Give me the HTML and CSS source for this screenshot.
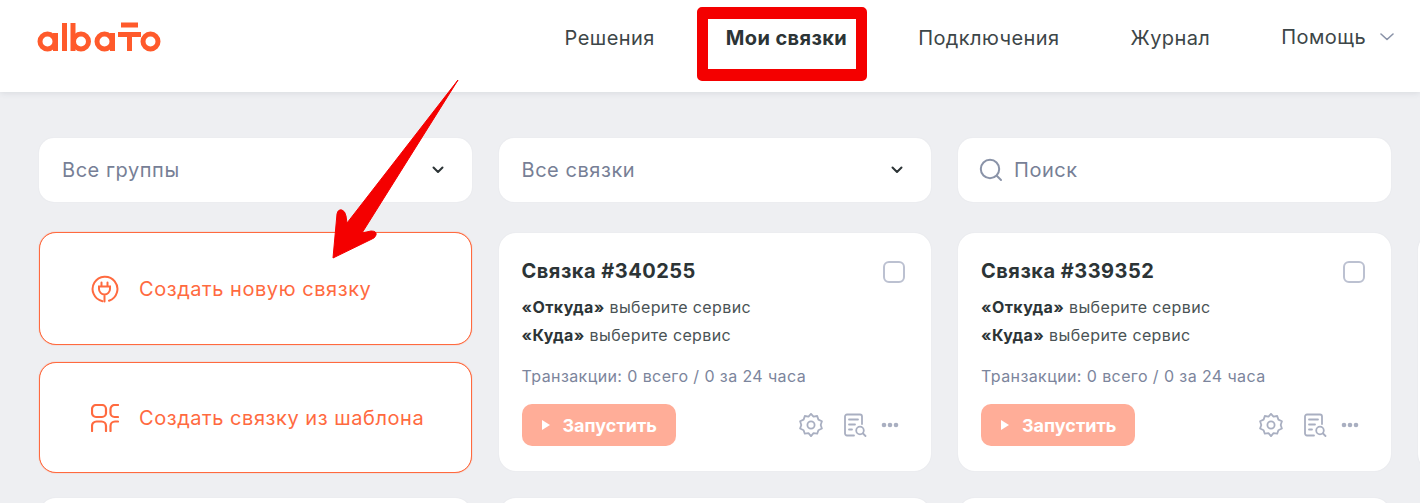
FILE: index.html
```html
<!DOCTYPE html>
<html lang="ru">
<head>
<meta charset="utf-8">
<title>Мои связки</title>
<link rel="stylesheet" href="styles.css">
</head>
<body>
<header class="topbar">
  <svg class="logo" width="130" height="34" viewBox="0 0 130 34" role="img" aria-label="albato">
    <g fill="none" stroke="#ff5a2b" stroke-width="5">
      <circle cx="10.500" cy="19.500" r="7.500"/><path d="M18.500 11V29"/>
      <path d="M27.500 1V29"/>
      <circle cx="44" cy="19.500" r="7.500"/><path d="M36 1V29"/>
      <circle cx="67.500" cy="19.500" r="7.500"/><path d="M75.500 11V29"/>
      <path d="M84 3H101M81 12.500H104M92.500 12.500V29"/>
      <circle cx="113.500" cy="19.500" r="7.500"/>
    </g>
  </svg>
  <nav class="nav">
    <a class="nav-item">Решения</a>
    <a class="nav-item nav-current">Мои связки<span class="highlight"></span></a>
    <a class="nav-item">Подключения</a>
    <a class="nav-item">Журнал</a>
    <a class="nav-item nav-help">Помощь
      <svg width="14" height="8" viewBox="0 0 14 8"><path d="M1 1l6 5.500L13 1" fill="none" stroke="#8a93a8" stroke-width="1.600" stroke-linecap="round" stroke-linejoin="round"/></svg>
    </a>
  </nav>
</header>

<main class="content">
  <section class="filters">
    <div class="filter"><span>Все группы</span>
      <svg width="12" height="8" viewBox="0 0 12 8"><path d="M1.500 1.500L6 6l4.500-4.500" fill="none" stroke="#2c3436" stroke-width="2" stroke-linecap="round" stroke-linejoin="round"/></svg>
    </div>
    <div class="filter"><span>Все связки</span>
      <svg width="12" height="8" viewBox="0 0 12 8"><path d="M1.500 1.500L6 6l4.500-4.500" fill="none" stroke="#2c3436" stroke-width="2" stroke-linecap="round" stroke-linejoin="round"/></svg>
    </div>
    <div class="filter filter-search">
      <svg width="24" height="24" viewBox="0 0 24 24"><circle cx="11" cy="11" r="9.200" fill="none" stroke="#8a93a8" stroke-width="2"/><path d="M18 18l4 4" stroke="#8a93a8" stroke-width="2" stroke-linecap="round"/></svg>
      <span>Поиск</span>
    </div>
  </section>

  <section class="grid">
    <div class="actions">
      <button class="action action-new">
        <svg width="28" height="28" viewBox="0 0 28 28" fill="none" stroke="#ff6a3f" stroke-width="2" stroke-linecap="round">
          <path d="M11.500 26.200A12.400 12.400 0 1 1 18 25.800"/>
          <path d="M10.500 7.500V11M16.500 7.500V11"/>
          <path d="M8 11.500H19V14a5.500 5.500 0 0 1-11 0ZM13.500 19.500V26.500"/>
        </svg>
        <span>Создать новую связку</span>
      </button>
      <button class="action action-template">
        <svg width="28" height="28" viewBox="0 0 28 28" fill="none" stroke="#ff6a3f" stroke-width="2.200" stroke-linecap="round">
          <rect x="1" y="1" width="14" height="12" rx="4"/>
          <path d="M27 1h-3.500a4 4 0 0 0-4 4v4a4 4 0 0 0 4 4H27"/>
          <path d="M1 27v-5a4.500 4.500 0 0 1 4.500-4.500h5A4.500 4.500 0 0 1 15 22v5"/>
          <path d="M19.500 27v-5a4.500 4.500 0 0 1 4.500-4.500h3"/>
        </svg>
        <span>Создать связку из шаблона</span>
      </button>
    </div>

    <article class="card">
      <div class="card-head"><h2>Связка #340255</h2><span class="checkbox"></span></div>
      <p class="route"><b>«Откуда»</b> выберите сервис</p>
      <p class="route"><b>«Куда»</b> выберите сервис</p>
      <p class="stats">Транзакции: 0 всего / 0 за 24 часа</p>
      <div class="card-foot">
        <button class="run"><svg width="10" height="12" viewBox="0 0 10 12"><path d="M1 1l8 5-8 5z" fill="#fff"/></svg>Запустить</button>
        <div class="tools">
          <svg class="tool-gear" width="24" height="24" viewBox="0 0 24 24" fill="none" stroke="#a9afc1" stroke-width="1.800" stroke-linejoin="round"><circle cx="12" cy="12" r="3.600"/><path d="M12 .900l2.500 2.800 3.700-.7 1.200 3.600 3.500 1.700-1.200 3.700 1.200 3.500-3.500 1.700-1.200 3.500-3.700-.5-2.500 3-2.500-3-3.700.5-1.200-3.500-3.500-1.700 1.200-3.500-1.200-3.700 3.500-1.700 1.200-3.600 3.700.7z"/></svg>
          <svg class="tool-doc" width="24" height="24" viewBox="0 0 24 24" fill="none" stroke="#a9afc1" stroke-width="1.800" stroke-linecap="round"><path d="M11 22.500H4a2 2 0 0 1-2-2v-17a2 2 0 0 1 2-2h13a2 2 0 0 1 2 2V11"/><path d="M6 6.500h9M6 11.500h6M6 16.500h3"/><circle cx="17" cy="17.500" r="3.800"/><path d="M20 20.500l2.500 2.500"/></svg>
          <svg class="tool-more" width="18" height="6" viewBox="0 0 18 6" fill="#a9afc1"><circle cx="3" cy="3" r="2.300"/><circle cx="9" cy="3" r="2.300"/><circle cx="15" cy="3" r="2.300"/></svg>
        </div>
      </div>
    </article>

    <article class="card">
      <div class="card-head"><h2>Связка #339352</h2><span class="checkbox"></span></div>
      <p class="route"><b>«Откуда»</b> выберите сервис</p>
      <p class="route"><b>«Куда»</b> выберите сервис</p>
      <p class="stats">Транзакции: 0 всего / 0 за 24 часа</p>
      <div class="card-foot">
        <button class="run"><svg width="10" height="12" viewBox="0 0 10 12"><path d="M1 1l8 5-8 5z" fill="#fff"/></svg>Запустить</button>
        <div class="tools">
          <svg class="tool-gear" width="24" height="24" viewBox="0 0 24 24" fill="none" stroke="#a9afc1" stroke-width="1.800" stroke-linejoin="round"><circle cx="12" cy="12" r="3.600"/><path d="M12 .900l2.500 2.800 3.700-.7 1.200 3.600 3.500 1.700-1.200 3.700 1.200 3.500-3.500 1.700-1.200 3.500-3.700-.5-2.500 3-2.500-3-3.700.5-1.200-3.500-3.500-1.700 1.200-3.500-1.200-3.700 3.500-1.700 1.200-3.600 3.700.7z"/></svg>
          <svg class="tool-doc" width="24" height="24" viewBox="0 0 24 24" fill="none" stroke="#a9afc1" stroke-width="1.800" stroke-linecap="round"><path d="M11 22.500H4a2 2 0 0 1-2-2v-17a2 2 0 0 1 2-2h13a2 2 0 0 1 2 2V11"/><path d="M6 6.500h9M6 11.500h6M6 16.500h3"/><circle cx="17" cy="17.500" r="3.800"/><path d="M20 20.500l2.500 2.500"/></svg>
          <svg class="tool-more" width="18" height="6" viewBox="0 0 18 6" fill="#a9afc1"><circle cx="3" cy="3" r="2.300"/><circle cx="9" cy="3" r="2.300"/><circle cx="15" cy="3" r="2.300"/></svg>
        </div>
      </div>
    </article>

    <article class="card"></article>
    <article class="card card-row2"></article>
    <article class="card card-row2"></article>
    <article class="card card-row2"></article>
    <article class="card card-row2"></article>
  </section>
</main>

<svg class="arrow" width="1420" height="503" viewBox="0 0 1420 503" aria-hidden="true">
  <path d="M458 80 L362 233 L371 231 Q377 231 376 235 Q375 238 372 239 L333 258 L337 214 Q338 209 342 210 Q345 211 346 216 L347 223 Z" fill="#f40000" stroke="#f40000" stroke-width="1" stroke-linejoin="round"/>
</svg>
```

FILE: styles.css
```css
* { box-sizing: border-box; }

html, body {
  margin: 0;
  width: 1420px;
  height: 503px;
  overflow: hidden;
}

body {
  position: relative;
  background: #eeeff2;
  font-family: Inter, "Liberation Sans", sans-serif;
  color: #2c3436;
}

.topbar {
  height: 92px;
  background: #fff;
  box-shadow: 0 1px 6px rgba(60, 70, 90, .12);
  display: flex;
  align-items: flex-start;
  justify-content: space-between;
  padding: 22px 26px 0 37px;
}

.logo { display: block; }

.nav {
  display: flex;
  align-items: center;
  gap: 71px;
  height: 32px;
  font-size: 20px;
  letter-spacing: .42px;
  color: #3d4648;
}

.nav-item { position: relative; white-space: nowrap; }

.nav-current { font-weight: 700; color: #2c3436; letter-spacing: .4px; }

.highlight {
  position: absolute;
  left: -29px;
  right: -20px;
  top: -19px;
  height: 74px;
  border-style: solid;
  border-color: #f40000;
  border-width: 12px 11px;
  border-radius: 5px;
}

.nav-help {
  display: flex;
  align-items: center;
  gap: 14px;
  margin-top: -3px;
}

.content { padding: 46px 0 0 39px; }

.filters {
  display: grid;
  grid-template-columns: repeat(3, 432.5px);
  gap: 27px;
  margin-bottom: 30px;
}

.filter {
  height: 64px;
  background: #fff;
  border-radius: 15px;
  display: flex;
  align-items: center;
  justify-content: space-between;
  padding: 0 28px 0 23px;
  font-size: 20px;
  letter-spacing: .55px;
  color: #777f96;
  box-shadow: 0 0 2px rgba(60, 70, 90, .06);
}

.filter-search { justify-content: flex-start; gap: 11px; padding-left: 21px; }

.grid {
  display: grid;
  grid-template-columns: repeat(4, 432.5px);
  grid-auto-rows: 241px;
  gap: 24px 27px;
}

.actions {
  display: flex;
  flex-direction: column;
  gap: 17px;
}

.action {
  display: flex;
  align-items: center;
  gap: 20px;
  padding: 0 0 0 51px;
  background: #fff;
  border: 1px solid #ff6a3f;
  border-radius: 17px;
  box-shadow: 0 0 1px #ff6a3f;
  font: 400 20px Inter, "Liberation Sans", sans-serif;
  letter-spacing: .55px;
  color: #ff6a3f;
}

.action-new { height: 113px; }
.action-template { height: 111px; }

.card {
  margin: 1px 0 2px;
  background: #fff;
  border-radius: 17px;
  padding: 24px 26px 0 23px;
  box-shadow: 0 0 2px rgba(60, 70, 90, .06);
}

.card-head {
  display: flex;
  align-items: center;
  justify-content: space-between;
  height: 28px;
  margin-bottom: 12px;
}

.card-head h2 {
  margin: 0;
  font-size: 20px;
  font-weight: 700;
  letter-spacing: .5px;
  color: #2c3436;
}

.checkbox {
  width: 22px;
  height: 22px;
  margin-top: 2px;
  border: 2px solid #bcc1d1;
  border-radius: 6px;
}

.route {
  margin: 0 0 8px;
  font-size: 16px;
  line-height: 20px;
  letter-spacing: .38px;
  color: #4a5355;
}

.route b { font-weight: 700; color: #2c3436; }

.stats {
  margin: 21px 0 0;
  font-size: 16px;
  line-height: 20px;
  letter-spacing: .4px;
  color: #7c859c;
}

.card-foot {
  display: flex;
  align-items: center;
  justify-content: space-between;
  margin-top: 18px;
}

.run {
  width: 154px;
  height: 42px;
  display: flex;
  align-items: center;
  gap: 12px;
  padding: 0 0 0 19px;
  border: 0;
  border-radius: 10px;
  background: #ffad98;
  color: #fff;
  font: 700 18px Inter, "Liberation Sans", sans-serif;
}

.tools {
  display: flex;
  align-items: center;
  gap: 20px;
  margin-right: 6px;
}

.tool-more { margin-left: -6px; }

.arrow {
  position: absolute;
  left: 0;
  top: 0;
  pointer-events: none;
}
```
